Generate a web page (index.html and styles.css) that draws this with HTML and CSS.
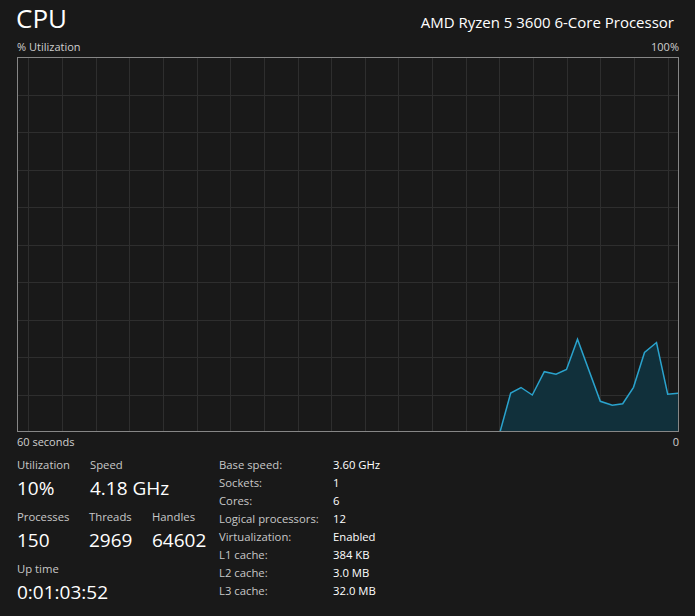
FILE: index.html
```html
<!DOCTYPE html>
<html lang="en">
<head>
    <meta charset="UTF-8">
    <meta name="viewport" content="width=device-width, initial-scale=1.0">
    <title>CPU</title>
    <link rel="stylesheet" href="styles.css">
</head>
<body>
    <div class="page">
        <div class="header">
            <h1>CPU</h1>
            <div class="model">AMD Ryzen 5 3600 6-Core Processor</div>
        </div>

        <div class="axis top">
            <span>% Utilization</span>
            <span>100%</span>
        </div>

        <div class="graph">
            <svg id="chart" width="660" height="373" shape-rendering="crispEdges"></svg>
        </div>

        <div class="axis bottom">
            <span>60 seconds</span>
            <span>0</span>
        </div>

        <div class="stats">
            <div class="live">
                <div class="row">
                    <div class="stat w-util">
                        <div class="label">Utilization</div>
                        <div class="value">10%</div>
                    </div>
                    <div class="stat">
                        <div class="label">Speed</div>
                        <div class="value">4.18 GHz</div>
                    </div>
                </div>
                <div class="row">
                    <div class="stat w-proc">
                        <div class="label">Processes</div>
                        <div class="value">150</div>
                    </div>
                    <div class="stat w-thr">
                        <div class="label">Threads</div>
                        <div class="value">2969</div>
                    </div>
                    <div class="stat">
                        <div class="label">Handles</div>
                        <div class="value">64602</div>
                    </div>
                </div>
                <div class="row">
                    <div class="stat">
                        <div class="label">Up time</div>
                        <div class="value">0:01:03:52</div>
                    </div>
                </div>
            </div>

            <div class="specs">
                <span class="key">Base speed:</span><span>3.60 GHz</span>
                <span class="key">Sockets:</span><span>1</span>
                <span class="key">Cores:</span><span>6</span>
                <span class="key">Logical processors:</span><span>12</span>
                <span class="key">Virtualization:</span><span>Enabled</span>
                <span class="key">L1 cache:</span><span>384 KB</span>
                <span class="key">L2 cache:</span><span>3.0 MB</span>
                <span class="key">L3 cache:</span><span>32.0 MB</span>
            </div>
        </div>
    </div>

    <script>
        const chart = document.getElementById('chart');
        const ns = 'http://www.w3.org/2000/svg';
        const W = 660, H = 373;

        function add(tag, attrs) {
            const el = document.createElementNS(ns, tag);
            for (const k in attrs) el.setAttribute(k, attrs[k]);
            chart.appendChild(el);
            return el;
        }

        for (let x = 10.3; x < W; x += 33.65) {
            add('line', { x1: Math.round(x) + 0.5, y1: 0, x2: Math.round(x) + 0.5, y2: H, class: 'grid' });
        }
        for (let i = 1; i < 10; i++) {
            const y = Math.round(i * 37.5 - 1) + 0.5;
            add('line', { x1: 0, y1: y, x2: W, y2: y, class: 'grid' });
        }

        // last ~16 samples of usage
        const pts = [
            [482, 374], [492.7, 335], [503, 329.5], [514.3, 337], [526.3, 313.7],
            [538, 316.3], [548.5, 311.5], [559.5, 281.3], [582.3, 343.3], [594.3, 347.3],
            [604.7, 345.7], [615.5, 329.3], [626.5, 294.5], [638.5, 284.5], [649.7, 336.2],
            [660.3, 335.3]
        ];
        const line = pts.map(p => p.join(',')).join(' ');
        add('polygon', { points: line + ' 660,373 482,373', class: 'area', 'shape-rendering': 'auto' });
        add('polyline', { points: line, class: 'usage', 'shape-rendering': 'auto' });
    </script>
</body>
</html>
```

FILE: styles.css
```css
html, body {
    margin: 0;
    background-color: #191919;
}
body {
    font-family: "Open Sans", "Noto Sans", sans-serif;
    color: #ffffff;
}
.page {
    padding: 0 16px 0 17px;
}
.header {
    display: flex;
    justify-content: space-between;
    align-items: baseline;
    height: 36px;
}
h1 {
    margin: 0;
    font-size: 26px;
    font-weight: 400;
    line-height: 36px;
    margin-left: -1px;
}
.model {
    font-size: 15px;
    padding-right: 5px;
}
.axis {
    display: flex;
    justify-content: space-between;
    font-size: 11px;
    color: #cfcfcf;
}
.axis.top {
    height: 21px;
    line-height: 21px;
}
.axis.bottom {
    height: 18px;
    line-height: 20px;
}
.graph {
    border: 1px solid #868686;
    height: 373px;
    overflow: hidden;
}
.graph svg {
    display: block;
}
.grid {
    stroke: #2e2e2e;
    stroke-width: 1;
}
.area {
    fill: #11303b;
    stroke: none;
}
.usage {
    fill: none;
    stroke: #2aa3cd;
    stroke-width: 1.5;
    stroke-linejoin: miter;
}
.stats {
    display: flex;
    margin-top: 6px;
}
.live {
    display: flex;
    flex-direction: column;
    gap: 6px;
    width: 202px;
}
.row {
    display: flex;
}
.stat .label {
    font-size: 11.3px;
    line-height: 18px;
    color: #c8c8c8;
}
.stat .value {
    font-size: 19px;
    line-height: 28px;
}
.w-util { width: 73px; }
.w-proc { width: 72px; }
.w-thr { width: 63px; }
.specs {
    display: grid;
    grid-template-columns: 114px auto;
    grid-auto-rows: 18px;
    font-size: 11.3px;
    line-height: 18px;
    align-content: start;
}
.specs .key {
    color: #c8c8c8;
}
```
